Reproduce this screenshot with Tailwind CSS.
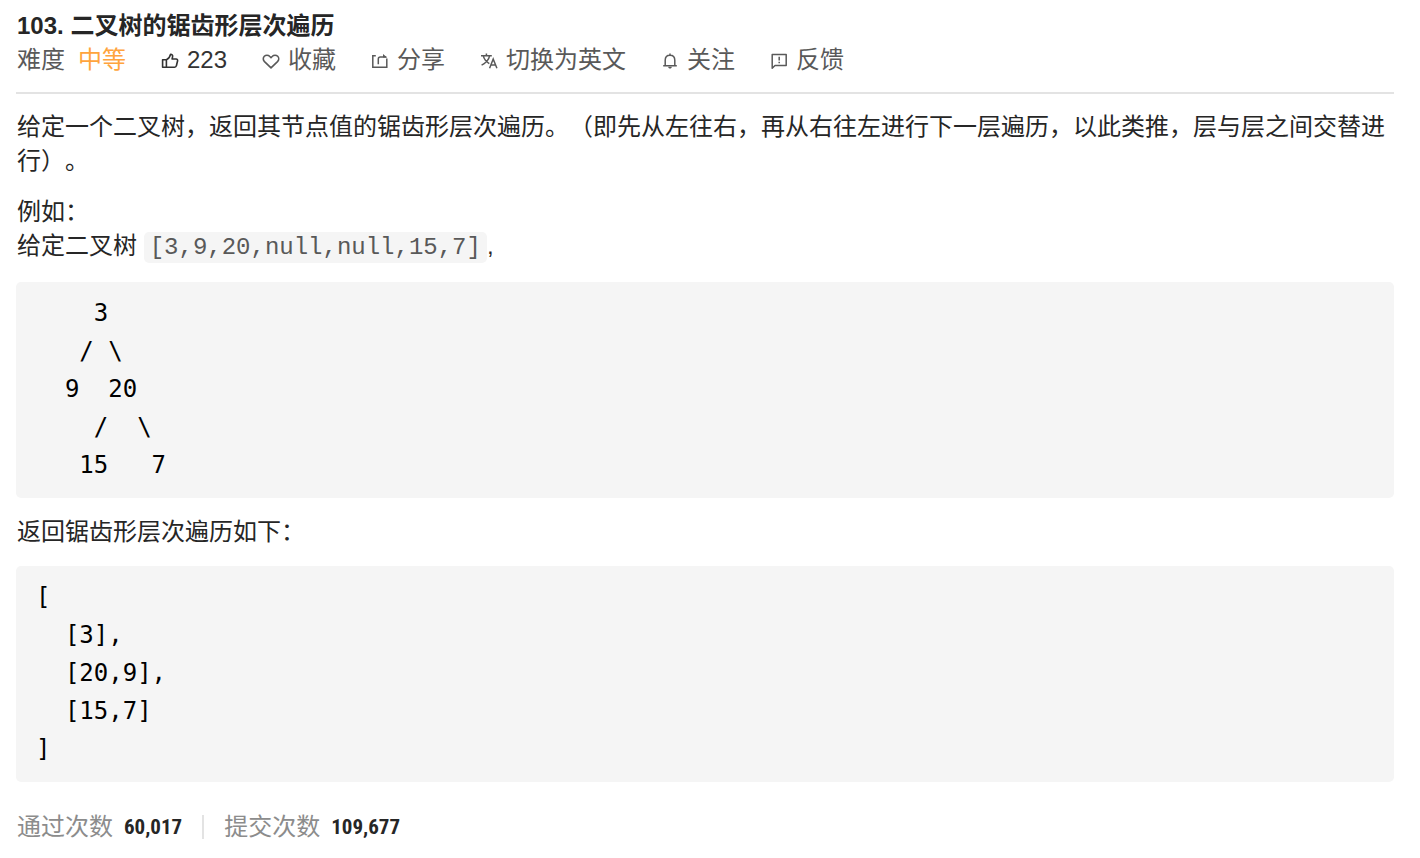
<!DOCTYPE html>
<html lang="zh-CN">
<head>
  <meta charset="UTF-8" />
  <meta name="viewport" content="width=device-width, initial-scale=1" />
  <title>103. 二叉树的锯齿形层次遍历</title>
  <script src="https://cdn.jsdelivr.net/npm/@tailwindcss/browser@4"></script>
</head>
<body class="min-h-screen bg-white text-[#262626] text-2xl leading-[34px] [text-spacing-trim:space-all] font-['Liberation_Sans','Noto_Sans_CJK_SC',sans-serif]">

  <main class="pl-4 pr-[26px] pt-[9px] pb-3">
    <!-- 标题 -->
    <header class="border-b-2 border-[#e3e3e3] px-px pb-[15px]">
      <h1 class="font-semibold">103. 二叉树的锯齿形层次遍历</h1>

      <div class="flex flex-wrap items-center gap-x-[35px] text-[#595959]">
        <div class="flex gap-[13px]">
          <span>难度</span>
          <span class="text-[#ffa43d]">中等</span>
        </div>
        <button type="button" class="flex items-center gap-2 text-[#333]">
          <svg class="size-[18px]" viewBox="0 0 18 18" fill="none" stroke="currentColor" stroke-width="1.6" stroke-linejoin="round">
            <path d="M5.400 8.800H1.600v7.400h3.800zM5.400 8.800c2-.8 3.600-2.900 4.200-5.600 1.400 0 2.300 1 2 2.500l-.5 2.300h4c1 0 1.700.8 1.500 1.800l-1.200 4.900c-.2 1-.9 1.500-1.800 1.500H5.400" />
          </svg>
          <span>223</span>
        </button>
        <button type="button" class="flex items-center gap-2">
          <svg class="size-[18px]" viewBox="0 0 18 18" fill="none" stroke="currentColor" stroke-width="1.6" stroke-linejoin="round">
            <path d="M9 16.800 2.500 10.600C.9 9 .9 6.700 2.300 5.300c1.500-1.500 3.900-1.500 5.300 0L9 6.700l1.400-1.400c1.400-1.500 3.800-1.500 5.300 0 1.400 1.400 1.400 3.700-.2 5.300z" />
          </svg>
          <span>收藏</span>
        </button>
        <button type="button" class="flex items-center gap-2">
          <svg class="size-[18px]" viewBox="0 0 18 18" fill="none" stroke="currentColor" stroke-width="1.500">
            <path d="M4.800 4.700H1.800v11.500h14V7.500M7.300 13.300V8c0-1.300.7-2 2-2h6" />
            <path d="m12 3 4.200 3.600H12z" fill="currentColor" stroke="none" />
          </svg>
          <span>分享</span>
        </button>
        <button type="button" class="flex items-center gap-2">
          <svg class="size-[18px]" viewBox="0 0 18 18" fill="none" stroke="currentColor" stroke-width="1.5">
            <path d="M1 4.800h10.800M6.400 2.600v2.200M9.600 4.800c-.7 3.500-3.600 7-8 9.300M3.300 4.800c.7 3 2.800 5.800 6 7.800M9.600 17.300l3.600-9.300 3.700 9.300M10.800 14.100h4.900" />
          </svg>
          <span>切换为英文</span>
        </button>
        <button type="button" class="flex items-center gap-2">
          <svg class="size-[18px]" viewBox="0 0 18 18" fill="none" stroke="currentColor" stroke-width="1.5">
            <path d="M2.200 14.800h13.600M4.200 14.800V9.300c0-3.100 1.800-5.100 4.800-5.100s4.800 2 4.800 5.100v5.500M9 4.200V2.500" />
            <path d="M7.200 15.800h3.600c0 1.100-.7 1.800-1.800 1.800s-1.800-.7-1.800-1.800z" fill="currentColor" stroke="none" />
          </svg>
          <span>关注</span>
        </button>
        <button type="button" class="flex items-center gap-2">
          <svg class="size-[18px]" viewBox="0 0 18 18" fill="none" stroke="currentColor" stroke-width="1.5">
            <path d="M2.200 3.500h14v11H5l-2.800 2.700z" stroke-linejoin="round" />
            <path d="M9.200 5.800v3.700M9.200 10.700v1.600" />
          </svg>
          <span>反馈</span>
        </button>
      </div>
    </header>

    <!-- 题目描述 -->
    <article class="pt-4">
      <p class="mb-[17px] pl-px">给定一个二叉树，返回其节点值的锯齿形层次遍历。（即先从左往右，再从右往左进行下一层遍历，以此类推，层与层之间交替进行）。</p>

      <p class="mb-[19px] pl-px">例如：<br />
        给定二叉树 <code class="rounded-[5px] bg-[#f5f5f5] px-[6px] py-[2px] text-2xl leading-none text-[#595959] font-['Liberation_Mono',monospace]">[3,9,20,null,null,15,7]</code>,</p>

      <pre class="mb-[17px] overflow-x-auto rounded-[5px] bg-[#f5f5f5] px-5 pt-3 pb-[14px] leading-[38px] text-black font-['DejaVu_Sans_Mono',monospace]">    3
   / \
  9  20
    /  \
   15   7</pre>

      <p class="mb-[17px] pl-px">返回锯齿形层次遍历如下：</p>

      <pre class="mb-7 overflow-x-auto rounded-[5px] bg-[#f5f5f5] px-5 pt-3 pb-[14px] leading-[38px] text-black font-['DejaVu_Sans_Mono',monospace]">[
  [3],
  [20,9],
  [15,7]
]</pre>
    </article>

    <!-- 统计 -->
    <footer class="flex flex-wrap items-center px-px text-[#8c8c8c]">
      <span>通过次数</span>
      <span class="ml-[11px] text-[21px] font-bold text-[#262626] font-['Roboto_Condensed',Roboto,sans-serif]">60,017</span>
      <span class="mx-5 h-6 w-0.5 bg-[#e3e3e3]"></span>
      <span>提交次数</span>
      <span class="ml-[11px] text-[21px] font-bold text-[#262626] font-['Roboto_Condensed',Roboto,sans-serif]">109,677</span>
    </footer>
  </main>

</body>
</html>
